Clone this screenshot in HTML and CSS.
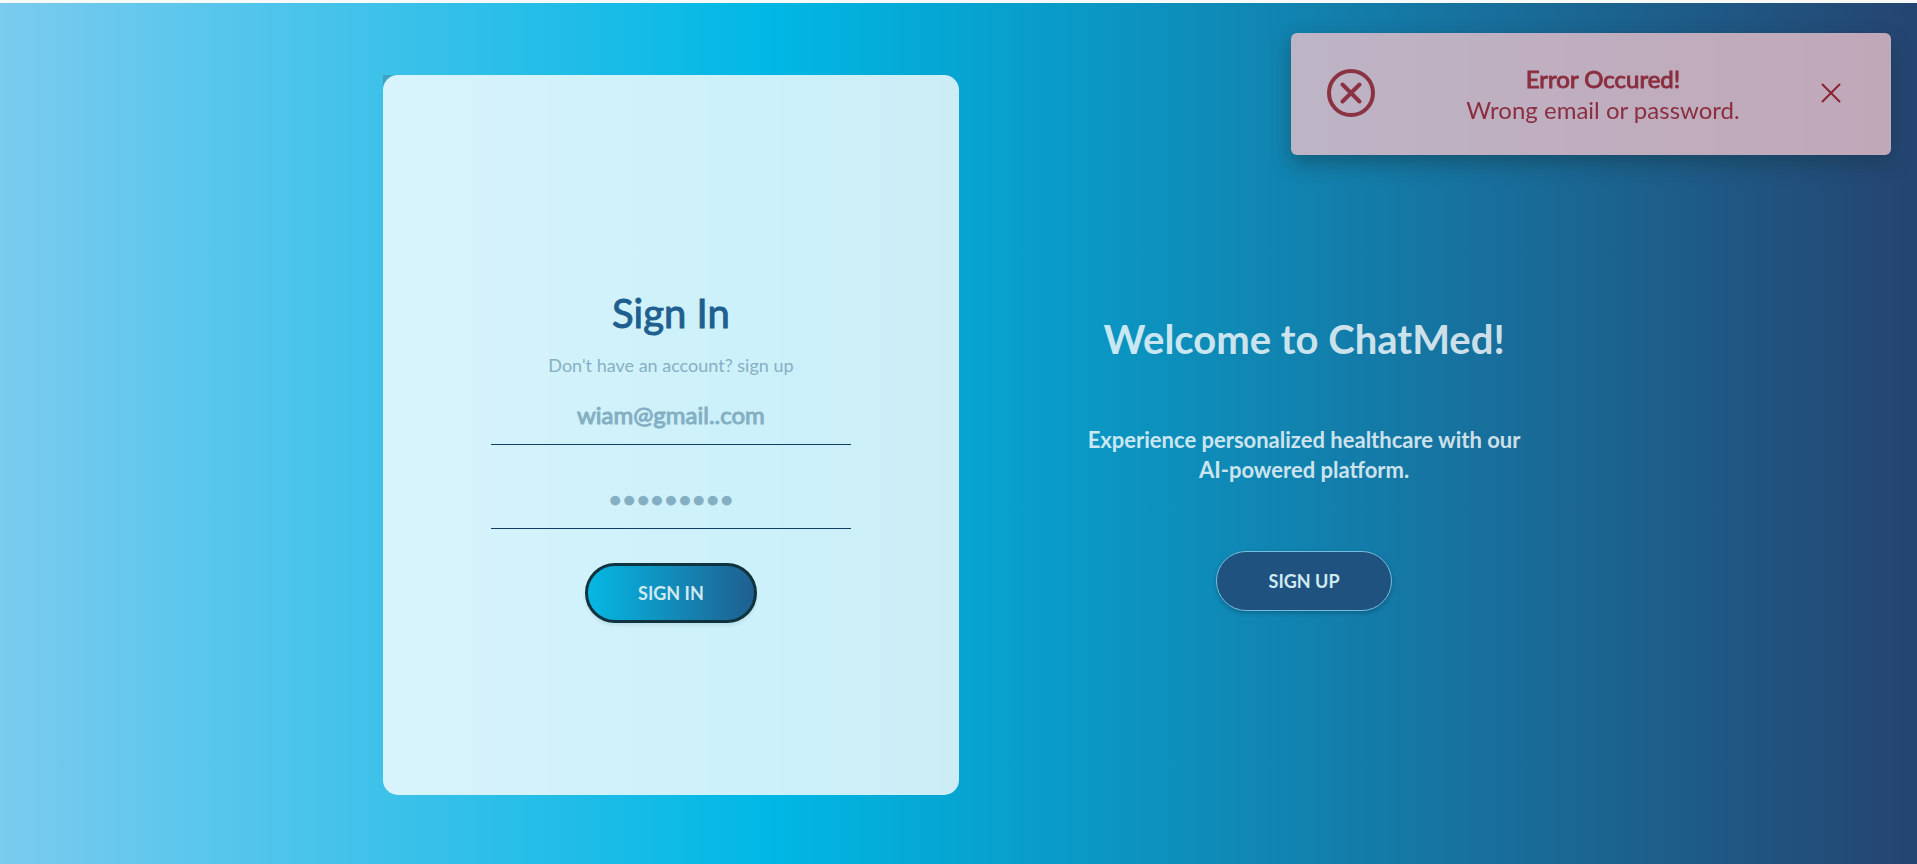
FILE: index.html
```html
<!DOCTYPE html>
<html lang="en">
<head>
<meta charset="utf-8">
<meta name="viewport" content="width=device-width, initial-scale=1">
<title>ChatMed</title>
<link rel="stylesheet" href="styles.css">
</head>
<body>
<main class="page">
  <form class="card">
    <h1 class="card-title">Sign In</h1>
    <p class="card-hint">Don't have an account? sign up</p>
    <input class="field" type="email" aria-label="Email" value="wiam@gmail..com">
    <input class="field field-password" type="password" aria-label="Password" value="chatmed12">
    <button class="btn btn-signin" type="button">SIGN IN</button>
  </form>
  <section class="welcome">
    <h2 class="welcome-title">Welcome to ChatMed!</h2>
    <p class="welcome-text">Experience personalized healthcare with our<br>AI-powered platform.</p>
    <button class="btn btn-signup" type="button">SIGN UP</button>
  </section>
</main>
<div class="toast" role="alert">
  <svg class="toast-icon" viewBox="0 0 48 48" aria-hidden="true"><circle cx="24" cy="24" r="22"/><path d="M15.500 15.500l17 17M32.500 15.500l-17 17"/></svg>
  <div class="toast-body">
    <strong class="toast-title">Error Occured!</strong>
    <span class="toast-message">Wrong email or password.</span>
  </div>
  <button class="toast-close" type="button" aria-label="Close"><svg viewBox="0 0 20 20" width="20" height="20" aria-hidden="true"><path d="M1.500 1.500l17 17M18.500 1.500l-17 17"/></svg></button>
</div>
</body>
</html>
```
FILE: styles.css
```css
* { box-sizing: border-box; }
body {
  margin: 0;
  font-family: Lato, sans-serif;
}
.page {
  min-height: 100vh;
  display: flex;
  align-items: center;
  border-top: 3px solid #f8fafa;
  background: linear-gradient(90deg, #7acbee 0%, #00b8e5 40%, #254470 100%);
  padding: 3px 20% 0;
}
.card {
  position: relative;
  flex: 1;
  min-height: 720px;
  display: flex;
  flex-direction: column;
  align-items: center;
  justify-content: center;
  padding-top: 41px;
  border-radius: 15px;
  background: rgba(255, 255, 255, 0.8);
}
/* Shaded corner of the panel behind the card */
.card::before {
  content: "";
  position: absolute;
  top: 0;
  left: 0;
  width: 15px;
  height: 15px;
  background: radial-gradient(circle at 100% 100%, transparent 15px, rgba(70, 125, 150, 0.5) 16px);
}
.card-title {
  margin: 0 0 15px;
  font-size: 40px;
  line-height: 50px;
  font-weight: 400;
  -webkit-text-stroke: 1px;
  color: #1f5f8f;
}
.card-hint {
  margin: 0 0 12px;
  font-size: 18px;
  line-height: 24px;
  color: #86afc4;
}
.field {
  width: 360px;
  max-width: 90%;
  height: 56px;
  margin-bottom: 28px;
  padding: 0 0 4px;
  border: 0;
  border-bottom: 1px solid #0f3f63;
  background: none;
  text-align: center;
  font: 400 24px Lato, sans-serif;
  -webkit-text-stroke: 1px;
  color: #84afc3;
  outline: 0;
}
.btn {
  height: 60px;
  border-radius: 30px;
  font: 700 18px Lato, sans-serif;
  color: #cfeaf3;
}
.btn-signin {
  width: 172px;
  margin-top: 6px;
  border: 3px solid #10343f;
  background: linear-gradient(90deg, #05b8e4, #1f5f8f);
  box-shadow: 0 3px 3px rgba(0, 60, 90, 0.08);
}
.btn-signup {
  width: 176px;
  border: 1px solid #74bfe0;
  background: #20527f;
  box-shadow: 0 2px 4px rgba(0, 30, 60, 0.3);
}
.welcome {
  flex: 1;
  display: flex;
  flex-direction: column;
  align-items: center;
  padding-top: 55px;
  margin-left: 58px;
  margin-right: -58px;
  text-align: center;
  color: rgba(255, 255, 255, 0.8);
}
.welcome-title {
  margin: 0 0 61px;
  font-size: 40px;
  line-height: 50px;
  font-weight: 700;
}
.welcome-text {
  margin: 0 0 66px;
  font-size: 22px;
  line-height: 30px;
  font-weight: 700;
}
.toast {
  position: fixed;
  top: 33px;
  right: 26px;
  width: 600px;
  max-width: 90%;
  height: 122px;
  display: flex;
  align-items: center;
  padding: 0 50px 2px 36px;
  border-radius: 6px;
  background: rgba(233, 193, 203, 0.8);
  box-shadow: 0 8px 20px rgba(20, 50, 60, 0.45);
  color: #8b2f40;
}
.toast-icon {
  width: 48px;
  height: 48px;
  fill: none;
  stroke: #8b3343;
  stroke-width: 4;
  stroke-linecap: round;
}
.toast-body {
  flex: 1;
  display: flex;
  flex-direction: column;
  padding: 2px 0 0 10px;
  text-align: center;
  font-size: 24px;
  line-height: 31px;
}
.toast-title {
  font-weight: 400;
  -webkit-text-stroke: 1px;
}
.toast-message {
  font-weight: 400;
}
.toast-close {
  display: flex;
  padding: 0;
  border: 0;
  background: none;
  fill: none;
  stroke: #8b2233;
  stroke-width: 2;
  stroke-linecap: round;
}
```
